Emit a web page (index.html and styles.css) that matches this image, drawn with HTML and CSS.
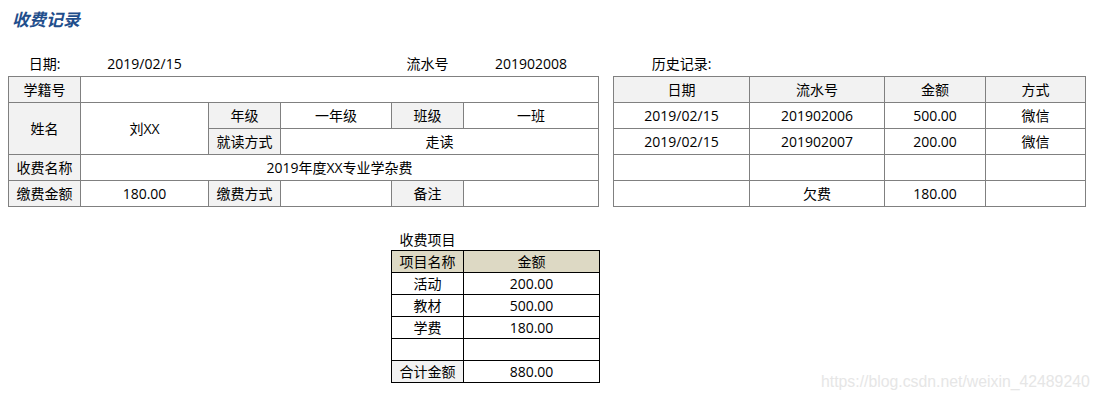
FILE: index.html
```html
<!DOCTYPE html>
<html lang="zh-CN">
<head>
<meta charset="utf-8">
<title>收费记录</title>
<link rel="stylesheet" href="styles.css">
</head>
<body>
<h1 class="title">收费记录</h1>
<div class="top">
  <table class="grid main">
    <colgroup>
      <col style="width:72px"><col style="width:128px"><col style="width:72px"><col style="width:111px"><col style="width:72px"><col style="width:135px">
    </colgroup>
    <tr class="plain">
      <td>日期:</td><td>2019/02/15</td><td></td><td></td><td>流水号</td><td>201902008</td>
    </tr>
    <tr>
      <td class="hd">学籍号</td><td colspan="5"></td>
    </tr>
    <tr>
      <td class="hd" rowspan="2">姓名</td><td rowspan="2">刘XX</td><td class="hd">年级</td><td>一年级</td><td class="hd">班级</td><td>一班</td>
    </tr>
    <tr>
      <td class="hd">就读方式</td><td colspan="3">走读</td>
    </tr>
    <tr>
      <td class="hd">收费名称</td><td colspan="5">2019年度XX专业学杂费</td>
    </tr>
    <tr>
      <td class="hd">缴费金额</td><td>180.00</td><td class="hd">缴费方式</td><td></td><td class="hd">备注</td><td></td>
    </tr>
  </table>
  <table class="grid history">
    <colgroup>
      <col style="width:136px"><col style="width:135px"><col style="width:101px"><col style="width:100px">
    </colgroup>
    <tr class="plain">
      <td>历史记录:</td><td></td><td></td><td></td>
    </tr>
    <tr>
      <td class="hd">日期</td><td class="hd">流水号</td><td class="hd">金额</td><td class="hd">方式</td>
    </tr>
    <tr>
      <td>2019/02/15</td><td>201902006</td><td>500.00</td><td>微信</td>
    </tr>
    <tr>
      <td>2019/02/15</td><td>201902007</td><td>200.00</td><td>微信</td>
    </tr>
    <tr>
      <td></td><td></td><td></td><td></td>
    </tr>
    <tr>
      <td></td><td>欠费</td><td>180.00</td><td></td>
    </tr>
  </table>
</div>
<table class="items">
  <colgroup>
    <col style="width:72px"><col style="width:136px">
  </colgroup>
  <tr class="plain">
    <td>收费项目</td><td></td>
  </tr>
  <tr>
    <td class="tan">项目名称</td><td class="tan">金额</td>
  </tr>
  <tr><td>活动</td><td>200.00</td></tr>
  <tr><td>教材</td><td>500.00</td></tr>
  <tr><td>学费</td><td>180.00</td></tr>
  <tr><td></td><td></td></tr>
  <tr><td class="hd">合计金额</td><td>880.00</td></tr>
</table>
<div class="watermark">https://blog.csdn.net/weixin_42489240</div>
</body>
</html>
```

FILE: styles.css
```css
html, body {
  margin: 0;
  padding: 0;
  background: #ffffff;
}
body {
  position: relative;
  width: 1102px;
  height: 402px;
  overflow: hidden;
  font-family: "Open Sans", "Noto Sans CJK SC", sans-serif;
  font-size: 14px;
  color: #000;
}
.title {
  margin: 0;
  padding: 8px 0 0 12px;
  height: 31px;
  box-sizing: border-box;
  font-family: "Noto Sans CJK SC", sans-serif;
  font-size: 17px;
  font-weight: bold;
  font-style: italic;
  line-height: 22px;
  color: #1f4e8c;
}
.top {
  display: flex;
  gap: 14px;
  padding: 20px 0 0 8px;
}
table {
  border-collapse: collapse;
  table-layout: fixed;
}
td {
  height: 25px;
  padding: 0;
  text-align: center;
  vertical-align: middle;
  line-height: 18px;
  white-space: nowrap;
}
.grid td {
  border: 1px solid #808080;
}
.grid tr.plain td {
  border: none;
  height: 25px;
}
.grid .hd {
  background: #f2f2f2;
}
.items {
  margin: 22px 0 0 391px;
}
.items td {
  height: 21px;
  border: 1px solid #000;
}
.items tr.plain td {
  border: none;
}
.items .tan {
  background: #ddd9c4;
}
.items .hd {
  background: #f2f2f2;
}
.watermark {
  position: absolute;
  left: 821px;
  top: 373px;
  font-family: "Liberation Sans", sans-serif;
  font-size: 15.8px;
  color: #e6e6e6;
  white-space: nowrap;
}
```
